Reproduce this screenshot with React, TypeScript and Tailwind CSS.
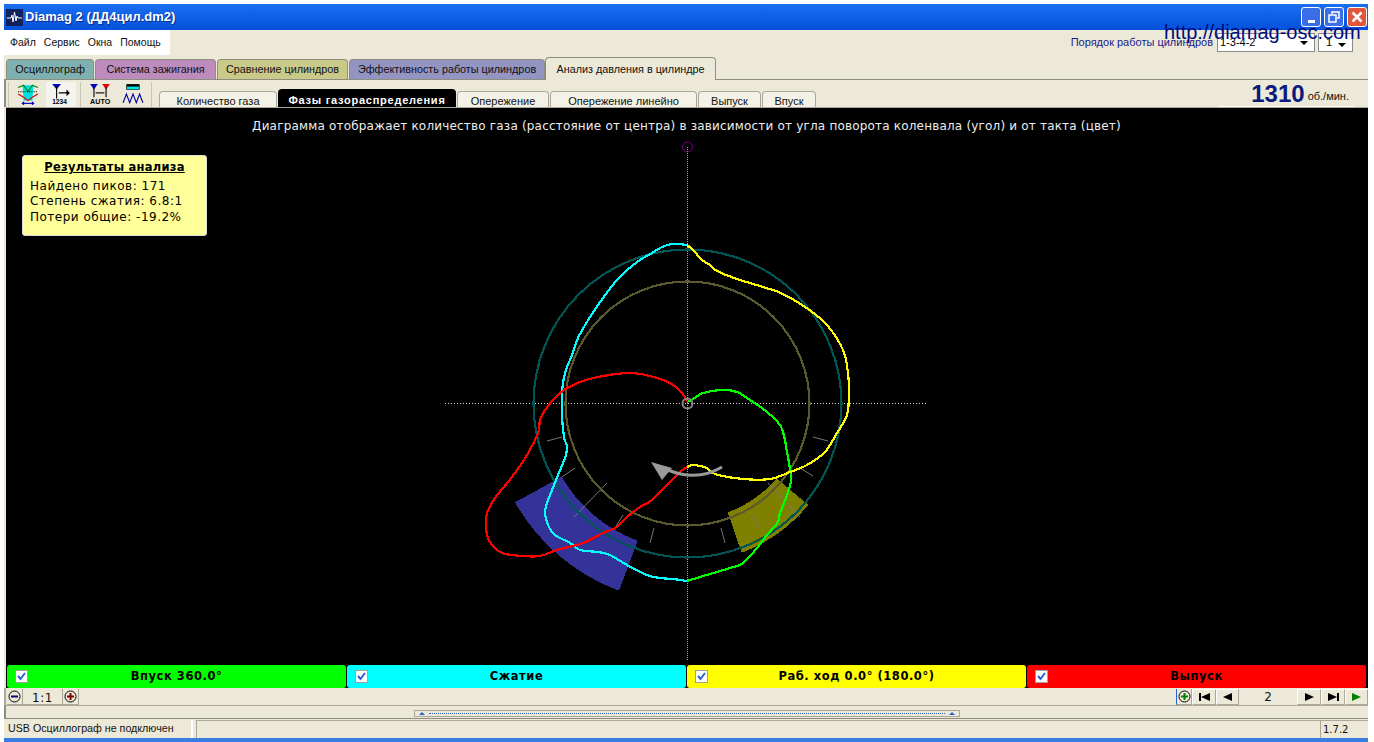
import React from "react";

const cyan = "690,246 680,244 672,244 662,247 652,253 640,260 627,270 617,280 603,298 590,317 578,338 572,355 565,373 562,393 562,416 564,437 567,447 565,458 558,475 552,490 547,503 545,513 548,525 555,535 570,543 580,550 598,552 610,555 627,565 647,575 660,578 673,579 687,581";
const green = "687,581 700,577 730,568 743,563 757,548 767,535 778,522 780,513 786,498 791,480 789,463 786,447 785,440 780,425 767,412 750,400 737,392 722,390 703,393 693,399 687,402";
const yellow = "687,245 693,250 702,260 710,265 717,271 737,279 763,287 783,294 808,309 827,325 843,350 848,373 849,393 848,410 845,420 837,433 825,452 807,465 790,472 770,479 743,479 715,474 707,468 694,465 687,467";
const red = "687,467 680,472 667,485 652,500 640,507 627,517 617,527 603,533 583,543 557,550 540,556 523,556 502,553 490,542 486,528 487,513 495,498 512,477 527,455 538,433 540,420 545,410 560,393 580,382 603,376 630,373 650,376 670,383 682,393 687,402";
const ticks = [[547,441,562,437],[562,477,575,468],[574,517,607,483],[615,528,623,515],[650,543,654,528],[725,543,721,528],[760,528,752,515],[800,517,768,483],[813,476,800,468],[828,441,813,437]];

function smooth(s: string) {
  const p = s.split(" ").map((q) => q.split(",").map(Number));
  let d = `M${p[0][0]} ${p[0][1]}`;
  for (let i = 0; i < p.length - 1; i++) {
    const a = p[Math.max(i - 1, 0)], b = p[i], c = p[i + 1], e = p[Math.min(i + 2, p.length - 1)];
    const c1x = b[0] + (c[0] - a[0]) / 6, c1y = b[1] + (c[1] - a[1]) / 6;
    const c2x = c[0] - (e[0] - b[0]) / 6, c2y = c[1] - (e[1] - b[1]) / 6;
    d += `C${c1x} ${c1y} ${c2x} ${c2y} ${c[0]} ${c[1]}`;
  }
  return d;
}

function Diagram() {
  return (
    <svg className="absolute left-0 top-0" width="1362" height="557" viewBox="6 108 1362 557">
      <line x1="687.5" y1="147" x2="687.5" y2="660" stroke="#a4a4c8" strokeDasharray="1 1" />
      <line x1="445" y1="403.5" x2="928" y2="403.5" stroke="#d8d8d8" strokeDasharray="1 2" />
      <path d="M561.7 476.7A146 146 0 0 0 637.7 540.7L619 590.7A199 199 0 0 1 515 502.3Z" fill="#333399" shapeRendering="crispEdges" />
      <path d="M727.7 512.3A117 117 0 0 0 776.7 478.3L808.3 505A159 159 0 0 1 741.7 552.7Z" fill="#808000" shapeRendering="crispEdges" />
      {ticks.map((t, i) => <line key={i} x1={t[0]} y1={t[1]} x2={t[2]} y2={t[3]} stroke="#777" />)}
      <g shapeRendering="crispEdges">
        <circle cx="687.5" cy="403.5" r="154" fill="none" stroke="#005555" strokeWidth="2.2" />
        <circle cx="687.5" cy="403.5" r="122" fill="none" stroke="#5a5a2c" strokeWidth="2.2" />
        <path d={smooth(cyan)} fill="none" stroke="#00ffff" strokeWidth="2.2" />
        <path d={smooth(green)} fill="none" stroke="#00ff00" strokeWidth="2.2" />
        <path d={smooth(yellow)} fill="none" stroke="#ffff00" strokeWidth="2.2" />
        <path d={smooth(red)} fill="none" stroke="#ff0000" strokeWidth="2.2" />
      </g>
      <path d="M722 467Q697 482 668 470" fill="none" stroke="#999" strokeWidth="3" />
      <polygon points="651,462 672,468 662,480" fill="#999" />
      <circle cx="687.5" cy="403.5" r="5" fill="none" stroke="#888" strokeWidth="2" />
      <circle cx="687.5" cy="147" r="5" fill="none" stroke="#800080" />
    </svg>
  );
}

function Check() {
  return (
    <span className="flex h-[13px] w-[13px] items-center justify-center border border-[#a0a0a0] bg-white">
      <svg width="9" height="9" viewBox="0 0 9 9"><path d="M1 4l2.500 3L8 1" fill="none" stroke="#2a60d8" strokeWidth="2" /></svg>
    </span>
  );
}

function Band({ bg, label, w }: { bg: string; label: string; w: string }) {
  return (
    <div className={`${bg} ${w} relative flex h-[23px] items-center justify-center rounded-[3px] text-[11.5px] font-bold tracking-[0.55px] text-black`}>
      <span className="absolute left-[8px] top-[5px]"><Check /></span>
      {label}
    </div>
  );
}

function MainTab({ cls, label, w }: { cls: string; label: string; w: string }) {
  return (
    <div className={`${cls} ${w} mt-[4px] flex h-[20px] items-center justify-center rounded-t-[4px] border border-b-0 border-[#8d8d80] text-[10.8px] text-[#111]`}>
      {label}
    </div>
  );
}

function SubTab({ label, w }: { label: string; w: string }) {
  return (
    <div className={`${w} h-[16px] overflow-hidden rounded-t-[4px] border border-b-0 border-[#aca899] bg-[#f4f2e6] pt-[2px] text-center text-[11px] leading-[14px] text-[#111]`}>
      {label}
    </div>
  );
}

function NavBtn({ w, children }: { w: string; children: React.ReactNode }) {
  return <div className={`${w} flex h-[16px] items-center justify-center border border-b-[#aca899] border-l-white border-r-[#aca899] border-t-white bg-[#ece9d8]`}>{children}</div>;
}

function RoundBtn({ sign, color, extra }: { sign: "minus" | "plus"; color: string; extra?: string }) {
  return (
    <div className={`flex h-[16px] w-[16px] items-center justify-center border-b border-r border-[#aca899] ${extra ?? ""}`}>
      <svg width="13" height="13" viewBox="0 0 13 13">
        <circle cx="6.5" cy="6.5" r="5.5" fill="#ece9d8" stroke="#000" />
        <rect x="3" y="5.5" width="7" height="2" fill={color} />
        {sign === "plus" && <rect x="5.5" y="3" width="2" height="7" fill={color} />}
      </svg>
    </div>
  );
}

function WinBtn({ bg, children }: { bg: string; children: React.ReactNode }) {
  return <div className={`${bg} flex h-[20px] w-[20px] items-center justify-center rounded-[3px] border border-white`}>{children}</div>;
}

export default function App() {
  return (
    <div className="relative h-[742px] w-[1374px] overflow-hidden bg-white pl-[4px] pt-[4px] text-[11px] font-['Liberation_Sans',sans-serif]">
      <div className="flex h-[738px] w-[1364px] flex-col bg-[#ece9d8]">
        {/* title bar */}
        <div className="flex h-[26px] shrink-0 items-center justify-between bg-gradient-to-b from-[#1a6ff0] to-[#0650da] pl-[2px] pr-[1px]">
          <div className="flex items-center gap-[2px]">
            <svg width="17" height="17" viewBox="0 0 17 17">
              <rect width="17" height="17" fill="#12205e" />
              <path d="M1 9h4l1-3 1 7 1.500-10 1.500 9 1-5 1 2h4" fill="none" stroke="#fff" />
            </svg>
            <span className="text-[13px] font-bold text-white [text-shadow:1px_1px_0_#0a2a90]">Diamag 2 (ДД4цил.dm2)</span>
          </div>
          <div className="flex gap-[3px]">
            <WinBtn bg="bg-[#3a6ee8]"><span className="mt-[8px] h-[3px] w-[7px] bg-white" /></WinBtn>
            <WinBtn bg="bg-[#3a6ee8]">
              <svg width="12" height="12" viewBox="0 0 12 12"><path d="M4 3V1h7v6H9M1 4h7v7H1z" fill="none" stroke="#fff" strokeWidth="1.500" /></svg>
            </WinBtn>
            <WinBtn bg="bg-[#e0573a]">
              <svg width="12" height="12" viewBox="0 0 12 12"><path d="M1.500 1.500l9 9M10.500 1.500l-9 9" stroke="#fff" strokeWidth="2.500" /></svg>
            </WinBtn>
          </div>
        </div>
        {/* menu row */}
        <div className="flex h-[25px] shrink-0 items-start justify-between">
          <div className="flex h-[25px] w-[166px] items-center gap-[8px] bg-white pl-[6px] text-[10.500px] text-[#111]">
            <span>Файл</span><span>Сервис</span><span>Окна</span><span>Помощь</span>
          </div>
          <div className="mr-[15px] mt-[3px] flex items-center">
            <span className="mr-[4px] text-[11px] text-[#1a1a8c]">Порядок работы цилиндров</span>
            <div className="flex h-[19px] w-[98px] items-center justify-between border border-[#8a8a8a] bg-white pl-[2px] pr-[6px] text-[11px]">
              <span>1-3-4-2</span><span className="border-x-[4px] border-t-[4px] border-x-transparent border-t-black" />
            </div>
            <div className="ml-[3px] flex h-[19px] w-[35px] items-center justify-between border border-[#8a8a8a] bg-white pl-[7px] pr-[6px] text-[11px]">
              <span>1</span><span className="mt-[4px] border-x-[4px] border-t-[4px] border-x-transparent border-t-black" />
            </div>
          </div>
        </div>
        {/* main tabs */}
        <div className="flex h-[25px] shrink-0 gap-px border-b border-[#8d8d80] pl-[2px]">
          <MainTab cls="bg-[#7fb0b0]" w="w-[88px]" label="Осциллограф" />
          <MainTab cls="bg-[#bd8cbd]" w="w-[121px]" label="Система зажигания" />
          <MainTab cls="bg-[#c9c98a]" w="w-[131px]" label="Сравнение цилиндров" />
          <MainTab cls="bg-[#9494c2]" w="w-[196px]" label="Эффективность работы цилиндров" />
          <div className="z-10 -ml-px mt-[2px] flex h-[23px] w-[171px] items-center justify-center rounded-t-[4px] border border-b-0 border-[#8d8d80] bg-[#ece9d8] text-[10.8px] text-[#111]">
            Анализ давления в цилиндре
          </div>
        </div>
        {/* tool row */}
        <div className="flex h-[27px] shrink-0 items-end border-l-2 border-[#8d8d80]">
          <div className="flex h-[26px] items-center">
            <div className="ml-[2px] flex h-[25px] w-[38px] items-center justify-center border-l border-[#c8c5b4]">
              <svg width="22" height="22" viewBox="0 0 20 20">
                <path d="M5 2h10l-1 14H6z" fill="#00e0e0" />
                <path d="M1 4l5-2 4 6 4-6 5 2" fill="none" stroke="#008000" />
                <path d="M1 10l5 3 4 3 4-3 5-3" fill="none" stroke="#e00000" />
                <line x1="1" y1="8" x2="19" y2="8" stroke="#000" strokeDasharray="1 1" />
                <path d="M5 18.500h10" stroke="#0000c0" />
                <path d="M4 18.500l2.500-2v4zM16 18.500l-2.500-2v4z" fill="#0000c0" />
              </svg>
            </div>
            <div className="flex h-[25px] w-[30px] items-center justify-center bg-[#f4f3ee]">
              <svg width="22" height="22" viewBox="0 0 20 20">
                <path d="M2 1h8L6 6z" fill="#0000c0" /><path d="M6 3v11M8 9h9" stroke="#000" />
                <path d="M15 6l3 3-3 3z" fill="#000" />
                <text x="2" y="19" fontSize="6" fontWeight="700" fontFamily="Liberation Sans">1234</text>
              </svg>
            </div>
            <div className="ml-[4px] h-[25px] border-l border-[#c8c5b4]" />
            <div className="flex h-[25px] w-[37px] items-center justify-center">
              <svg width="22" height="22" viewBox="0 0 20 20">
                <path d="M1 1h7L4.500 6z" fill="#0000c0" /><path d="M12 1h7l-3.500 5z" fill="#e00000" />
                <path d="M4.500 4v9M15.500 4v9" stroke="#000" /><path d="M6 9h8" stroke="#000" />
                <text x="1" y="19" fontSize="6.500" fontWeight="700" fontFamily="Liberation Sans">AUTO</text>
              </svg>
            </div>
            <div className="flex h-[25px] w-[30px] items-center justify-center">
              <svg width="22" height="22" viewBox="0 0 20 20">
                <rect x="4" y="1" width="12" height="2" fill="#000" /><rect x="4" y="3" width="12" height="3" fill="#00e0e0" stroke="#000" strokeWidth="0.500" />
                <path d="M1 18l3-8 3 8 3-8 3 8 3-8 3 8" fill="none" stroke="#0000a0" />
              </svg>
            </div>
            <div className="ml-[3px] h-[25px] border-l border-[#c8c5b4]" />
          </div>
          <div className="ml-[7px] flex items-end gap-px">
            <SubTab w="w-[118px]" label="Количество газа" />
            <div className="h-[18px] w-[178px] overflow-hidden rounded-t-[4px] bg-black pt-[4px] text-center text-[11px] font-bold leading-[14px] tracking-[0.75px] text-white">Фазы газораспределения</div>
            <SubTab w="w-[92px]" label="Опережение" />
            <SubTab w="w-[147px]" label="Опережение линейно" />
            <SubTab w="w-[63px]" label="Выпуск" />
            <SubTab w="w-[54px]" label="Впуск" />
          </div>
          <div className="ml-auto mr-[14px] flex h-[25px] w-[136px] items-center justify-end gap-[3px] border-b border-white pr-[5px]">
            <span className="text-[24px] font-bold leading-none text-[#0b1a7c]">1310</span>
            <span className="mt-[5px] text-[11px] text-[#111]">об./мин.</span>
          </div>
        </div>
        {/* canvas */}
        <div className="ml-[2px] flex h-[581px] shrink-0 flex-col border-t border-[#aca899] bg-black font-['DejaVu_Sans',sans-serif]">
          <div className="relative h-[557px] shrink-0">
            <Diagram />
            <div className="absolute left-0 right-0 top-[10px] pr-[1px] text-center text-[12px] leading-[16px] text-[#eee] tracking-[0.185px]">
              Диаграмма отображает количество газа (расстояние от центра) в зависимости от угла поворота коленвала (угол) и от такта (цвет)
            </div>
            <div className="absolute left-[16px] top-[47px] h-[81px] w-[185px] rounded-[3px] border border-[#ddd] bg-[#ffff99] px-[7px] pt-[4px] text-[12px] leading-[15.5px] tracking-[0.5px] text-black">
              <div className="mb-[3px] text-center text-[11.5px] font-bold tracking-[0.25px] underline">Результаты анализа</div>
              <div>Найдено пиков: 171</div>
              <div>Степень сжатия: 6.8:1</div>
              <div>Потери общие: -19.2%</div>
            </div>
          </div>
          <div className="flex gap-px pl-px">
            <Band bg="bg-[#00ff00]" w="w-[339px]" label="Впуск 360.0°" />
            <Band bg="bg-[#00ffff]" w="w-[339px]" label="Сжатие" />
            <Band bg="bg-[#ffff00]" w="w-[339px]" label="Раб. ход 0.0° (180.0°)" />
            <Band bg="bg-[#ff0000]" w="w-[339px]" label="Выпуск" />
          </div>
        </div>
        {/* navigation row */}
        <div className="flex h-[18px] shrink-0 items-start border-b border-l-2 border-[#aca899] pl-px pt-px">
          <RoundBtn sign="minus" color="#000080" />
          <div className="flex h-[16px] w-[40px] items-center justify-center border-b border-r border-[#aca899] pt-[2px] font-['DejaVu_Sans',sans-serif] text-[12px] tracking-[0.5px] text-[#111]">1:1</div>
          <RoundBtn sign="plus" color="#800000" />
          <div className="ml-auto flex">
            <RoundBtn sign="plus" color="#008000" extra="border-l border-l-[#2a60c8]" />
            <NavBtn w="w-[24px]"><span className="h-[8px] w-[2px] bg-black" /><span className="border-y-[4px] border-r-[9px] border-y-transparent border-r-black" /></NavBtn>
            <NavBtn w="w-[23px]"><span className="border-y-[4px] border-r-[9px] border-y-transparent border-r-black" /></NavBtn>
            <div className="flex h-[16px] w-[58px] items-center justify-center font-['DejaVu_Sans',sans-serif] text-[12px] text-[#111]">2</div>
            <NavBtn w="w-[24px]"><span className="border-y-[4px] border-l-[9px] border-y-transparent border-l-black" /></NavBtn>
            <NavBtn w="w-[24px]"><span className="border-y-[4px] border-l-[9px] border-y-transparent border-l-black" /><span className="h-[8px] w-[2px] bg-black" /></NavBtn>
            <NavBtn w="w-[23px]"><span className="border-y-[4px] border-l-[9px] border-y-transparent border-l-[#008000]" /></NavBtn>
          </div>
        </div>
        {/* splitter */}
        <div className="flex h-[13px] shrink-0 items-end justify-center border-b border-l-2 border-[#8d8d80] pb-px">
          <div className="flex h-[7px] w-[546px] items-center justify-between border border-[#aca899] px-[4px]">
            <span className="border-x-[3px] border-b-[3px] border-x-transparent border-b-[#2a60c8]" />
            <span className="mx-[4px] flex-1 border-t border-dotted border-[#2a60c8]" />
            <span className="border-x-[3px] border-b-[3px] border-x-transparent border-b-[#2a60c8]" />
          </div>
        </div>
        {/* status bar */}
        <div className="mt-px flex h-[18px] shrink-0 items-stretch text-[10.7px] text-[#111]">
          <div className="flex w-[189px] items-center border-r-2 border-white pb-[2px] pl-[4px]">USB Осциллограф не подключен</div>
          <div className="ml-[3px] w-[1124px] border-l border-t border-[#aca899]" />
          <div className="flex flex-1 items-center border-l border-t border-[#aca899] pl-[2px] font-['DejaVu_Sans',sans-serif] text-[10px]">1.7.2</div>
        </div>
      </div>
      <div className="absolute bottom-0 left-[4px] h-[4px] w-[1364px] bg-[#3a7fe0]" />
      <div className="pointer-events-none absolute left-[1164px] top-[20px] text-[20px] leading-[24px] text-[#000c80]">http://diamag-osc.com</div>
    </div>
  );
}
